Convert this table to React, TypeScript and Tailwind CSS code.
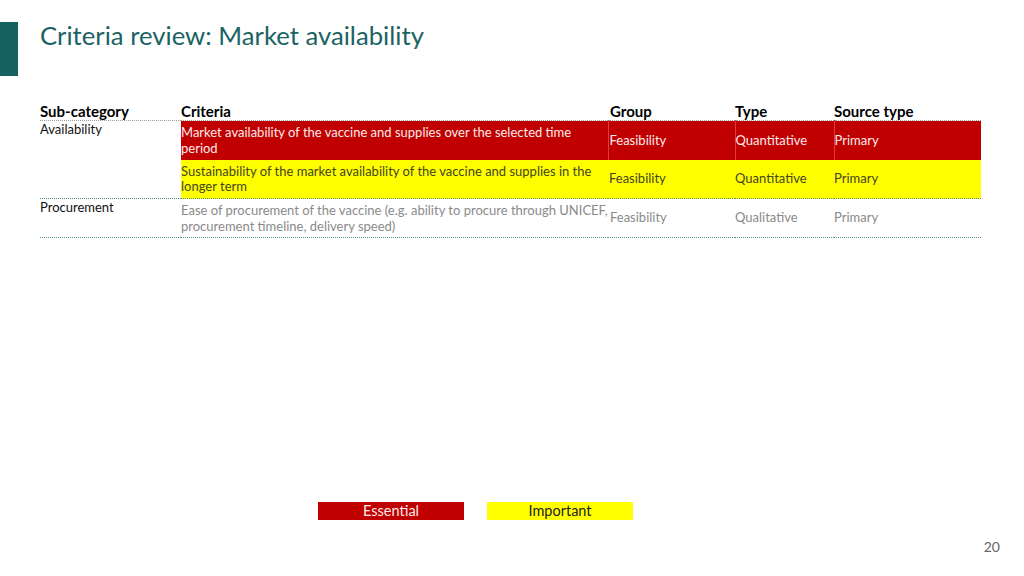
const ROWS = [
  {
    criteria: "Market availability of the vaccine and supplies over the selected time period",
    group: "Feasibility",
    type: "Quantitative",
    source: "Primary",
    bg: "bg-[#c00000]",
    text: "text-[#fbeaea]",
    cell: "border-l border-[#e23a3a]",
  },
  {
    criteria: "Sustainability of the market availability of the vaccine and supplies in the longer term",
    group: "Feasibility",
    type: "Quantitative",
    source: "Primary",
    bg: "bg-[#ffff00]",
    text: "text-[#45451e]",
    cell: "",
  },
];

export default function App() {
  return (
    <div
      className="relative w-[1024px] h-[576px] bg-white overflow-hidden"
      style={{ fontFamily: "Lato, 'Open Sans', sans-serif" }}
    >
      {/* header */}
      <div className="flex items-start pt-[22px]">
        <div className="w-[18px] h-[54px] bg-[#146262]" />
        <h1 className="ml-[22px] mt-[-2px] text-[25.7px] leading-[30px] text-[#1b6363]">
          Criteria review: Market availability
        </h1>
      </div>

      {/* table */}
      <div className="ml-[40px] mt-[27px] w-[941px]">
        <table className="w-full border-collapse table-fixed">
          <colgroup>
            <col className="w-[141px]" />
            <col className="w-[427px]" />
            <col className="w-[127px]" />
            <col className="w-[99px]" />
            <col className="w-[147px]" />
          </colgroup>
          <thead>
            <tr className="border-b border-dotted border-[#9a9a9a] text-[15px] font-bold text-black leading-[17px]">
              <th className="text-left font-bold">Sub-category</th>
              <th className="text-left font-bold">Criteria</th>
              <th className="text-left font-bold pl-[2px]">Group</th>
              <th className="text-left font-bold">Type</th>
              <th className="text-left font-bold">Source type</th>
            </tr>
          </thead>
          <tbody className="text-[13px] leading-[15.5px]">
            {ROWS.map((r, i) => (
              <tr
                key={i}
                className={i === 1 ? "border-b border-dotted border-[#4f8f86]" : ""}
              >
                {i === 0 && (
                  <td rowSpan={2} className="align-top pt-[1px] text-[#111] bg-white">
                    Availability
                  </td>
                )}
                <td className={`${r.bg} ${r.text} h-[39px] align-top pt-[4px] pr-[4px]`}>
                  {r.criteria}
                </td>
                <td className={`${r.bg} ${r.text} ${r.cell} align-middle pl-[1px]`}>{r.group}</td>
                <td className={`${r.bg} ${r.text} ${r.cell} align-middle`}>{r.type}</td>
                <td className={`${r.bg} ${r.text} ${r.cell} align-middle`}>{r.source}</td>
              </tr>
            ))}
            <tr className="border-b border-dotted border-[#4f8f86]">
              <td className="align-top pt-[1px] text-[#111]">Procurement</td>
              <td className="h-[39px] align-top pt-[4px] text-[#8a8a8a] whitespace-nowrap overflow-visible">
                Ease of procurement of the vaccine (e.g. ability to procure through UNICEF,
                <br />
                procurement timeline, delivery speed)
              </td>
              <td className="align-middle text-[#8a8a8a] pl-[2px]">Feasibility</td>
              <td className="align-middle text-[#8a8a8a]">Qualitative</td>
              <td className="align-middle text-[#8a8a8a]">Primary</td>
            </tr>
          </tbody>
        </table>
      </div>

      {/* legend */}
      <div className="absolute left-[318px] top-[502px] flex gap-[23px] text-[14.5px] leading-[18px]">
        <div className="w-[146px] h-[18px] bg-[#c00000] text-[#fbeaea] text-center">Essential</div>
        <div className="w-[146px] h-[18px] bg-[#ffff00] text-[#222] text-center">Important</div>
      </div>

      <div className="absolute right-[24px] top-[536px] text-[14px] text-[#666]">20</div>
    </div>
  );
}
